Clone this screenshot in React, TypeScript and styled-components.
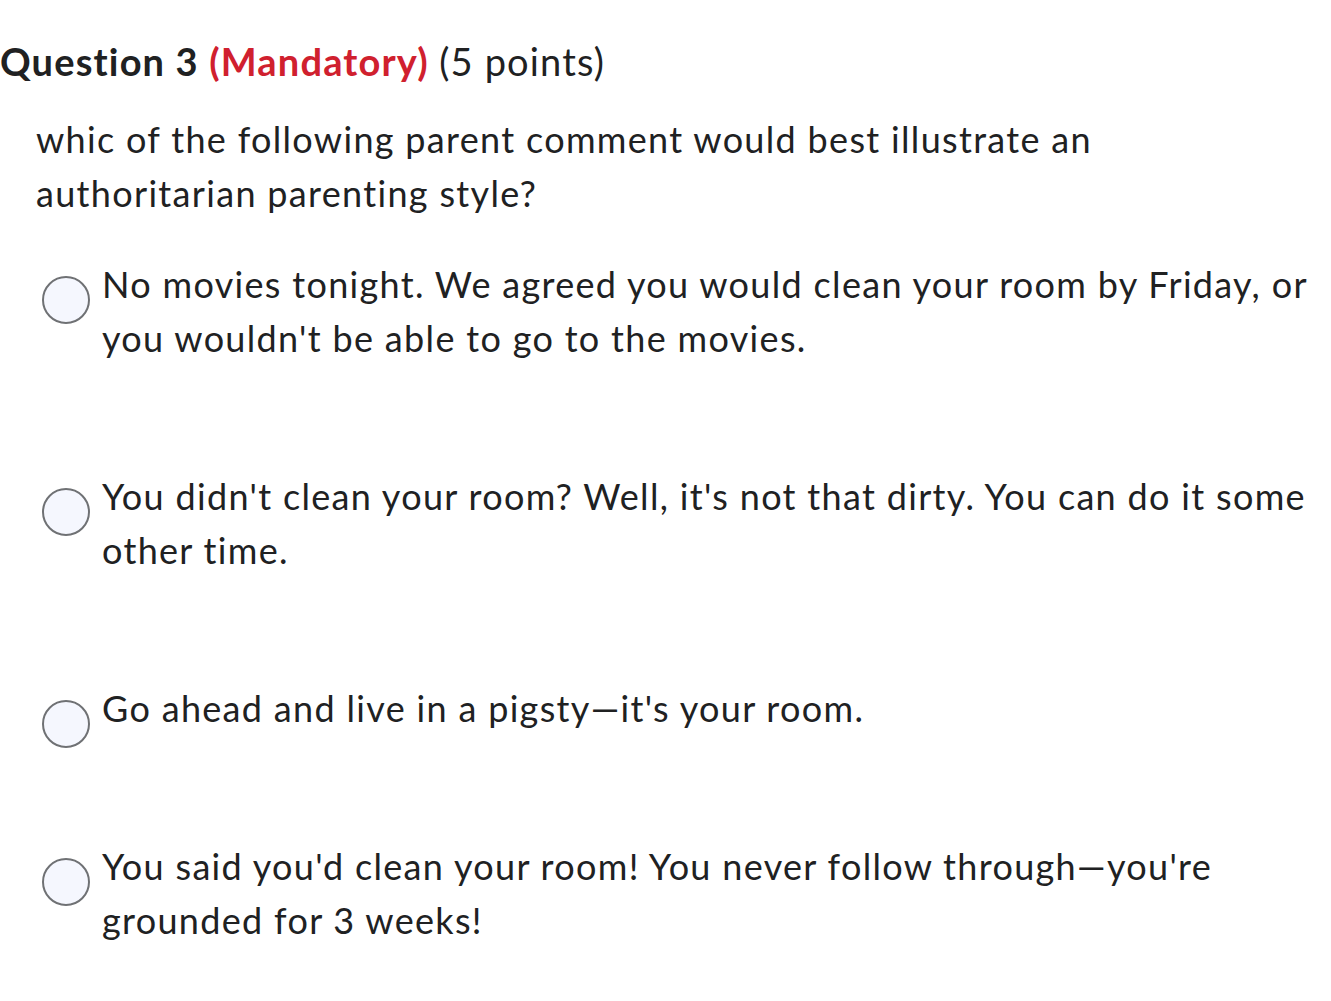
import React from 'react'
import styled, { createGlobalStyle } from 'styled-components'

const GlobalStyle = createGlobalStyle`
  html, body {
    margin: 0;
    padding: 0;
    background: #ffffff;
  }
  body {
    font-family: 'Lato', 'Noto Sans', sans-serif;
    color: #202122;
    font-variant-ligatures: none;
  }
`

const Page = styled.div`
  padding: 38px 18px 40px 0;
`

const Heading = styled.h2`
  margin: 0;
  font-size: 38px;
  line-height: 46px;
  font-weight: 700;
  letter-spacing: 1.16px;
  color: #202122;
`

const Mandatory = styled.span`
  color: #d0202e;
`

const Points = styled.span`
  font-weight: 400;
`

const Prompt = styled.p`
  margin: 28px 0 0;
  padding-left: 36px;
  font-size: 36px;
  line-height: 54px;
  letter-spacing: 1.32px;
`

const Choices = styled.div`
  display: flex;
  flex-direction: column;
  gap: 104px;
  margin-top: 37px;
  padding-left: 42px;
`

const Choice = styled.label`
  display: flex;
  align-items: flex-start;
  gap: 12px;
  cursor: pointer;
`

const Radio = styled.span`
  flex: none;
  box-sizing: border-box;
  width: 48px;
  height: 48px;
  margin: 19px 0 -13px;
  border: 2px solid #6f7174;
  border-radius: 50%;
  background: #f5f7fe;
`

const ChoiceText = styled.span`
  font-size: 36px;
  line-height: 54px;
  letter-spacing: 1.32px;
`

const options = [
  "No movies tonight. We agreed you would clean your room by Friday, or you wouldn't be able to go to the movies.",
  "You didn't clean your room? Well, it's not that dirty. You can do it some other time.",
  'Go ahead and live in a pigsty\u2014it\'s your room.',
  "You said you'd clean your room! You never follow through\u2014you're grounded for 3 weeks!",
]

export default function App() {
  return (
    <>
      <GlobalStyle />
      <Page>
        <Heading>
          Question 3 <Mandatory>(Mandatory)</Mandatory> <Points>(5 points)</Points>
        </Heading>
        <Prompt>
          whic of the following parent comment would best illustrate an authoritarian parenting style?
        </Prompt>
        <Choices>
          {options.map((text) => (
            <Choice key={text}>
              <Radio />
              <ChoiceText>{text}</ChoiceText>
            </Choice>
          ))}
        </Choices>
      </Page>
    </>
  )
}
